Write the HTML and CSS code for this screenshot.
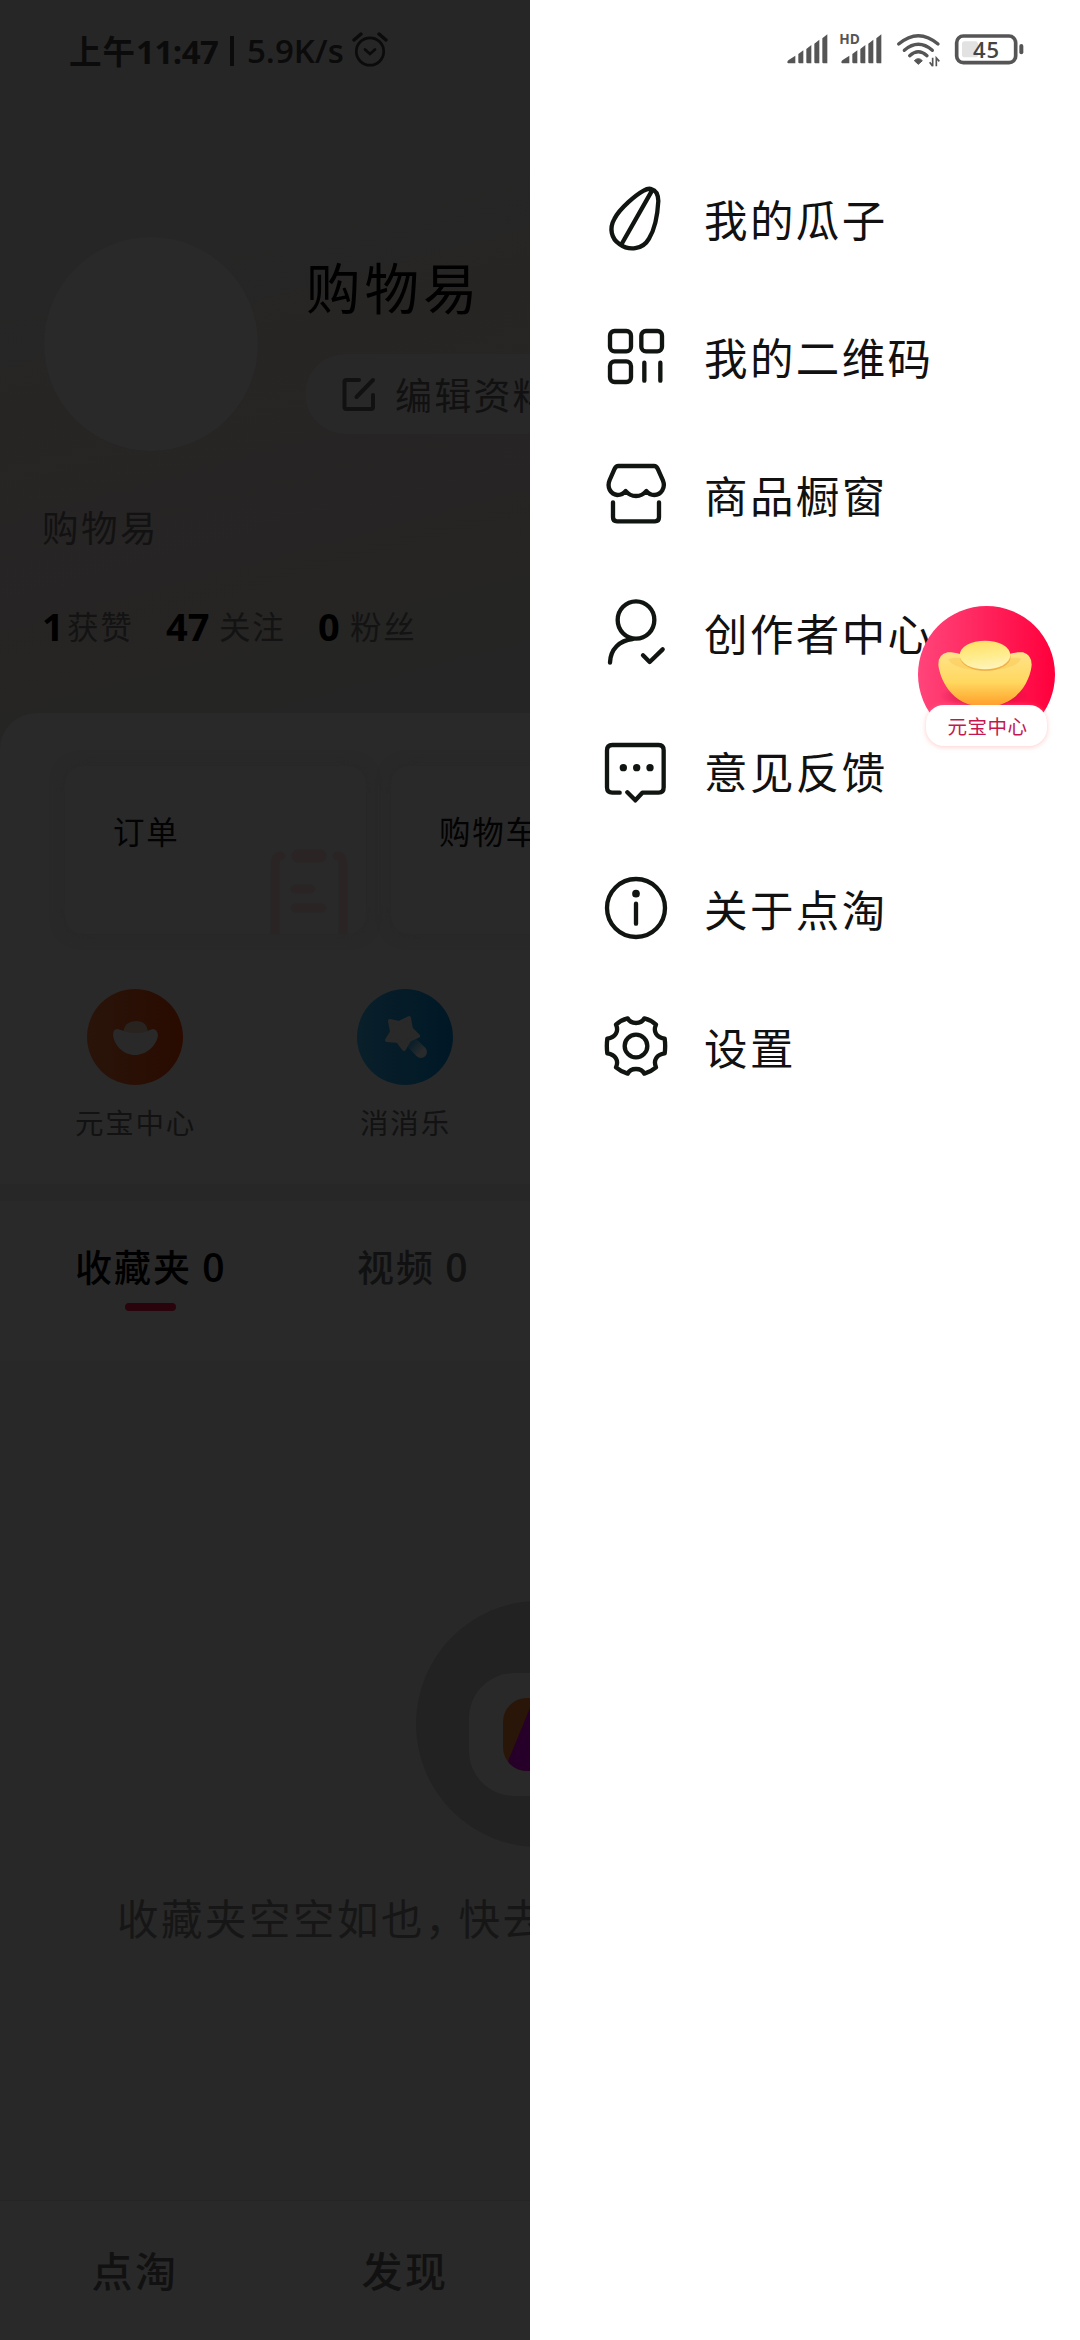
FILE: index.html
```html
<!DOCTYPE html>
<html lang="zh-CN">
<head>
<meta charset="utf-8">
<title>点淘</title>
<link rel="stylesheet" href="styles.css">
</head>
<body>
<div class="screen">
  <main class="profile">
    <div class="status-left">
      <span class="time">上午<span class="clock">11:47</span></span><span class="bar"></span><span class="speed">5.9K/s</span>
      <svg class="alarm" width="36" height="36" viewBox="0 0 36 36" fill="none" stroke="#0b0b0b" stroke-linecap="round">
        <circle cx="18" cy="19.500" r="13.700" stroke-width="2.700"/>
        <path d="M13 17.500l5 4.500 5-4.500" stroke-width="2.700"/>
        <path d="M2 8l7-6M34 8l-7-6" stroke-width="3.400"/>
      </svg>
    </div>
    <header class="head">
      <div class="avatar"></div>
      <div class="who">
        <h1 class="name">购物易</h1>
        <div class="edit">
          <svg width="36" height="36" viewBox="0 0 36 36" fill="none" stroke="#111" stroke-width="4" stroke-linecap="round" stroke-linejoin="round"><path d="M18 4H5.500Q3.500 4 3.500 6V31Q3.500 33 5.500 33H30Q32 33 32 31V19M15.500 21L32 4"/></svg>
          <span>编辑资料</span>
        </div>
      </div>
    </header>
    <p class="bio">购物易</p>
    <div class="stats">
      <span class="stat s1"><b>1</b><span>获赞</span></span>
      <span class="stat s2"><b>47</b><span>关注</span></span>
      <span class="stat s3"><b>0</b><span>粉丝</span></span>
    </div>
    <section class="panel">
      <div class="cards">
        <div class="card">
          <span>订单</span>
          <svg class="order" width="78" height="88" viewBox="0 0 78 88" fill="none" stroke="#2b2425" stroke-width="8.500" stroke-linecap="round">
            <path d="M11 10Q5 10 5 19V92M67 10Q73 10 73 19V92"/><path d="M28 10H50" stroke-width="13"/><path d="M25 43H41M25 62H52"/>
          </svg>
        </div>
        <div class="card"><span>购物车</span></div>
      </div>
      <div class="apps">
        <div class="app">
          <svg width="96" height="96" viewBox="0 0 96 96">
            <defs>
              <linearGradient id="orange"><stop offset="0" stop-color="#29140a"/><stop offset="1" stop-color="#290b00"/></linearGradient>
              <linearGradient id="blue"><stop offset="0" stop-color="#091f2a"/><stop offset="1" stop-color="#001826"/></linearGradient>
              <linearGradient id="stick" x2="1" y2="1"><stop offset="0" stop-color="#0d202a"/><stop offset="1" stop-color="#282a2b"/></linearGradient>
            </defs>
            <circle cx="48" cy="48" r="48" fill="url(#orange)"/>
            <path d="M36 43Q38 32 49 32T61 43Q49 47 36 43Z" fill="#29231f"/>
            <path d="M30 40Q26 40 26 46C27 56 36 66 48 66S70 56 71 46Q70 40 66 40C63 40 60 44 49 44S34 40 30 40Z" fill="#292929"/>
          </svg>
          <span>元宝中心</span>
        </div>
        <div class="app">
          <svg width="96" height="96" viewBox="0 0 96 96">
            <circle cx="48" cy="48" r="48" fill="url(#blue)"/>
            <path d="M56 55L64 63" stroke="url(#stick)" stroke-width="12" stroke-linecap="round"/>
            <path d="M33 32L42 34 52 29 54 40 61 47 52 51 47 60 41 52 30 51 35 43Z" fill="#292929" stroke="#292929" stroke-width="4" stroke-linejoin="round"/>
          </svg>
          <span>消消乐</span>
        </div>
      </div>
    </section>
    <nav class="tabs">
      <div class="tab active"><span>收藏夹 <em>0</em></span><i></i></div>
      <div class="tab"><span>视频 <em>0</em></span></div>
    </nav>
    <section class="empty">
      <svg width="246" height="246" viewBox="0 0 246 246">
        <defs><clipPath id="logo"><rect x="87" y="97" width="73" height="73" rx="24"/></clipPath></defs>
        <circle cx="123" cy="123" r="123" fill="#222"/>
        <rect x="53" y="72" width="140" height="123" rx="45" fill="#292929"/>
        <g clip-path="url(#logo)"><path d="M87 97h73v73H87z" fill="#2a1608"/><path d="M118 97L88 170H160V97Z" fill="#260029"/></g>
      </svg>
      <p>收藏夹空空如也<span class="comma">，</span>快去</p>
    </section>
    <footer class="bottom"><span>点淘</span><span>发现</span></footer>
  </main>

  <aside class="drawer">
    <div class="status-right">
      <svg width="240" height="40" viewBox="0 0 720 120" fill="#555">
        <path d="M1 112Q1 107 5 105L25 92V115H4Q1 115 1 112ZM34 87L49 76V115H37Q34 115 34 112ZM58 72L73 60V115H61Q58 115 58 112ZM82 56L97 44V115H85Q82 115 82 112ZM106 40L121 28V115H109Q106 115 106 112Z"/>
        <path d="M163 112Q163 107 167 105L187 92V115H166Q163 115 163 112ZM196 87L211 76V115H199Q196 115 196 112ZM220 72L235 60V115H223Q220 115 220 112ZM244 56L259 44V115H247Q244 115 244 112ZM268 40L283 28V115H271Q268 115 268 112Z"/>
        <text x="157" y="58" class="hd">HD</text>
        <path d="M335 57Q394 7 453 57M352 76Q394 40 436 76M368 92Q394 68 420 92" fill="none" stroke="#555" stroke-width="10" stroke-linecap="round"/>
        <path d="M382 107Q394 95 406 107L394 118Z" stroke="#555" stroke-width="3" stroke-linejoin="round"/>
        <path d="M437 98V124M437 124L428 112M448 124V99L457 109" fill="none" stroke="#555" stroke-width="5"/>
        <rect x="509" y="33" width="177" height="80" rx="20" fill="#fff" stroke="#555" stroke-width="11"/>
        <rect x="525" y="49" width="48" height="48" rx="8" fill="#e2e2e2"/>
        <rect x="697" y="57" width="12" height="31" rx="6"/>
        <text x="558" y="98" class="level">45</text>
      </svg>
    </div>
    <ul class="menu">
      <li><svg viewBox="48 54 240 240"><path d="M214 87Q234 92 235 123C233 160 226 205 207 236C188 270 146 273 118 252C94 236 87 205 103 177C120 144 169 104 191 92Q204 84 214 87ZM216 92L125 252"/></svg><span>我的瓜子</span></li>
      <li><svg viewBox="48 468 240 240"><rect x="90" y="513" width="63" height="61" rx="14"/><rect x="184" y="513" width="62" height="61" rx="14"/><rect x="90" y="604" width="63" height="62" rx="14"/><path d="M193 608V662M241 608V662"/></svg><span>我的二维码</span></li>
      <li><svg viewBox="48 882 240 240"><path d="M115 918H222Q229 918 233 926L249 962C257 983 244 1004 223 1005Q208 1005 199 993Q187 1008 168 1008Q149 1008 137 993Q128 1005 112 1005C91 1002 80 982 89 960L104 926Q108 918 115 918ZM99 1027V1072Q99 1084 111 1084H225Q237 1084 237 1072V1027"/></svg><span>商品橱窗</span></li>
      <li><svg viewBox="48 96 240 240"><ellipse cx="168" cy="180" rx="55" ry="56"/><path d="M158 237C119 241 91 268 90 308M189 286L209 306 248 268"/></svg><span>创作者中心</span></li>
      <li><svg viewBox="48 510 240 240"><path d="M119 698H97Q81 698 81 682V571Q81 555 97 555H236Q251 555 251 571V682Q251 698 236 698H187L166 721 142 697"/><g class="dots"><circle cx="130" cy="623" r="11"/><circle cx="170" cy="623" r="11"/><circle cx="210" cy="623" r="11"/></g></svg><span>意见反馈</span></li>
      <li><svg viewBox="48 144 240 240"><circle cx="168" cy="264" r="87"/><path d="M168 251V311"/><circle class="dots" cx="168" cy="221" r="11.500"/></svg><span>关于点淘</span></li>
      <li><svg viewBox="48 558 240 240"><circle cx="168" cy="678" r="34"/><path d="M143 595Q150 609 168 609T193 595Q213 600 228 614C219 634 228 652 254 656Q257 678 254 700C230 703 219 721 228 742Q213 755 193 761Q186 747 168 747T143 761Q123 755 108 742C117 722 107 704 82 700Q79 678 82 656C107 652 117 634 108 614Q123 600 143 595Z"/></svg><span>设置</span></li>
    </ul>
  </aside>

  <div class="badge">
    <svg width="137" height="137" viewBox="1015 138 411 411">
      <defs>
        <linearGradient id="pink"><stop offset="0" stop-color="#ff457a"/><stop offset="1" stop-color="#ff003c"/></linearGradient>
        <linearGradient id="gold" x2="0" y2="1"><stop offset="0" stop-color="#ffe389"/><stop offset=".55" stop-color="#ffd860"/><stop offset="1" stop-color="#ff9d25"/></linearGradient>
        <linearGradient id="nugget" x2=".2" y2="1"><stop offset="0" stop-color="#ffdf62"/><stop offset=".6" stop-color="#ffec8c"/><stop offset="1" stop-color="#fff3b5"/></linearGradient>
        <radialGradient id="shade"><stop offset="0" stop-color="#b30035" stop-opacity=".7"/><stop offset="1" stop-color="#b30035" stop-opacity="0"/></radialGradient>
      </defs>
      <circle cx="1220.500" cy="343.500" r="205.500" fill="url(#pink)"/>
      <ellipse cx="1215" cy="408" rx="135" ry="38" fill="url(#shade)"/>
      <path d="M1104 277C1130 274 1150 290 1216 290S1300 274 1330 277Q1356 284 1356 314C1354 350 1322 440 1216 440S1080 350 1076 314Q1076 282 1104 277Z" fill="url(#gold)"/>
      <path d="M1106 298C1135 288 1150 298 1216 298S1295 288 1324 296C1316 318 1270 331 1216 331S1114 320 1106 298Z" fill="#f5b942" opacity=".3"/>
      <ellipse cx="1217" cy="290" rx="76" ry="43" fill="#e08a25" opacity=".45"/>
      <ellipse cx="1216" cy="285" rx="76" ry="43" fill="url(#nugget)"/>
    </svg>
    <span class="badge-label">元宝中心</span>
  </div>
</div>
</body>
</html>
```

FILE: styles.css
```css
* { box-sizing: border-box; margin: 0; padding: 0; }
body { font-family: "Noto Sans CJK SC", sans-serif; background: #fff; }
svg { display: block; flex: none; }
.screen { position: relative; display: flex; width: 1080px; height: 2340px; overflow: hidden; white-space: nowrap; }

.profile { width: 530px; height: 2340px; overflow: hidden; display: flex; flex-direction: column; color: #111;
  background: linear-gradient(165deg, #262626 0, #262626 300px, #272524 400px, #272425 520px, #262523 680px, #252525 760px); }
.status-left { height: 102px; padding-left: 69px; display: flex; align-items: center; flex: none; color: #0b0b0b; font-size: 32.500px; font-weight: 700; }
.time { width: 151px; letter-spacing: 1px; margin-top: -2px; }
.clock, .speed { font-family: "Open Sans", sans-serif; font-size: 33px; font-weight: 700; }
.clock { letter-spacing: -.500px; margin-left: 0; }
.bar { width: 4px; height: 30px; margin: 0 0 0 10px; background: #0b0b0b; }
.speed { width: 104px; margin-left: 13px; margin-top: -2px; font-weight: 600; letter-spacing: 0; }
.alarm { margin-top: -2px; margin-left: 1px; }

.head { display: flex; gap: 47px; padding-left: 44px; margin-top: 135px; height: 214px; flex: none; }
.avatar { width: 214px; height: 214px; border-radius: 50%; background: #292929; flex: none; }
.who { display: flex; flex-direction: column; }
.name { height: 100px; line-height: 98px; font-size: 54.500px; font-weight: 400; letter-spacing: 4px; color: #000; padding-left: 1px; }
.edit { margin-top: 17px; width: 260px; height: 80px; flex: none; border-radius: 40px; background: #282828; display: flex; align-items: center; gap: 18px; padding-left: 36px; font-size: 37px; letter-spacing: 2.200px; }
.edit span { margin-top: -1px; }
.bio { margin: 56px 0 0 42px; height: 40px; line-height: 40px; font-size: 36.500px; letter-spacing: 2.500px; color: #121212; flex: none; }
.stats { display: flex; margin: 60px 0 0 42px; height: 40px; flex: none; align-items: center; }
.stat { display: flex; align-items: center; font-size: 31.500px; letter-spacing: 1.700px; color: #131313; }
.stat span { margin-top: -4px; }
.stat b { font: 700 38px/40px "Open Sans", sans-serif; letter-spacing: 0; color: #000; margin-top: -3px; }
.s1 { width: 124px; } .s2 { width: 152px; }
.s1 b { width: 25px; } .s2 b { width: 53px; } .s3 b { width: 32px; }

.panel { margin-top: 66px; height: 471px; flex: none; background: #292929; border-radius: 36px 0 0 0; padding-top: 53px; }
.cards { display: flex; gap: 25px; padding-left: 65px; }
.card { position: relative; width: 301px; height: 168px; flex: none; border-radius: 18px; box-shadow: 0 0 14px #272727; padding: 41px 0 0 48px; line-height: 46px; font-size: 31.500px; letter-spacing: 1.700px; color: #030303; overflow: hidden; }
.order { position: absolute; right: 18px; bottom: 0; }
.apps { display: flex; margin-top: 55px; }
.app { width: 270px; flex: none; display: flex; flex-direction: column; align-items: center; gap: 20px; color: #121212; font-size: 28.500px; line-height: 34px; letter-spacing: 1.800px; }
.app span { margin-left: 1px; }

.tabs { height: 177px; flex: none; border-top: 17px solid #272727; background: #292929; display: flex; padding-left: 75px; font-size: 37px; font-weight: 500; line-height: 50px; letter-spacing: 2px; color: #111; }
.tab { width: 282px; padding-top: 40px; flex: none; }
.tab em { font: 600 39px/50px "Open Sans", sans-serif; }
.active { color: #000; }
.tab i { display: block; width: 51px; height: 8px; margin: 12px 0 0 50px; border-radius: 4px; background: #2a040c; }
.tab > span { display: block; height: 50px; }

.empty { flex: 1; background: #282828; padding-top: 240px; }
.empty svg { margin-left: 416px; }
.empty p { margin: 45px 0 0 117px; line-height: 50px; font-size: 41.500px; letter-spacing: 2.500px; color: #161616; }
.comma { letter-spacing: -8px; }
.bottom { height: 140px; flex: none; border-top: 1px solid #252525; background: #292929; display: flex; }
.bottom span { width: 270px; flex: none; text-align: center; line-height: 136px; font-size: 41px; font-weight: 500; letter-spacing: 2.500px; }

.drawer { width: 550px; background: #fff; }
.status-right { height: 151px; padding: 25px 0 0 257px; }
.status-right svg { overflow: visible; }
.hd { font: 700 41px "Open Sans", sans-serif; }
.level { font: 600 66px "Open Sans", sans-serif; fill: #444; letter-spacing: 3px; }
.menu { list-style: none; padding-left: 66px; color: #111; }
.menu li { height: 138px; display: flex; align-items: center; gap: 28px; font-size: 43.500px; letter-spacing: 2.400px; }
.menu span { margin-bottom: 4px; }
.menu svg { width: 80px; height: 80px; margin-bottom: 4px; fill: none; stroke: #111511; stroke-width: 13; stroke-linecap: round; stroke-linejoin: round; }
.menu .dots { fill: #111511; stroke: none; }

.badge { position: absolute; left: 918px; top: 606px; width: 137px; }
.badge-label { position: absolute; left: 8px; top: 99px; width: 121px; height: 41px; border-radius: 18px; background: #fff; box-shadow: 0 1px 5px #ff9a9a80; text-align: center; line-height: 41px; font-size: 19.500px; letter-spacing: .500px; color: #c2184f; padding-left: 2px; }
```
